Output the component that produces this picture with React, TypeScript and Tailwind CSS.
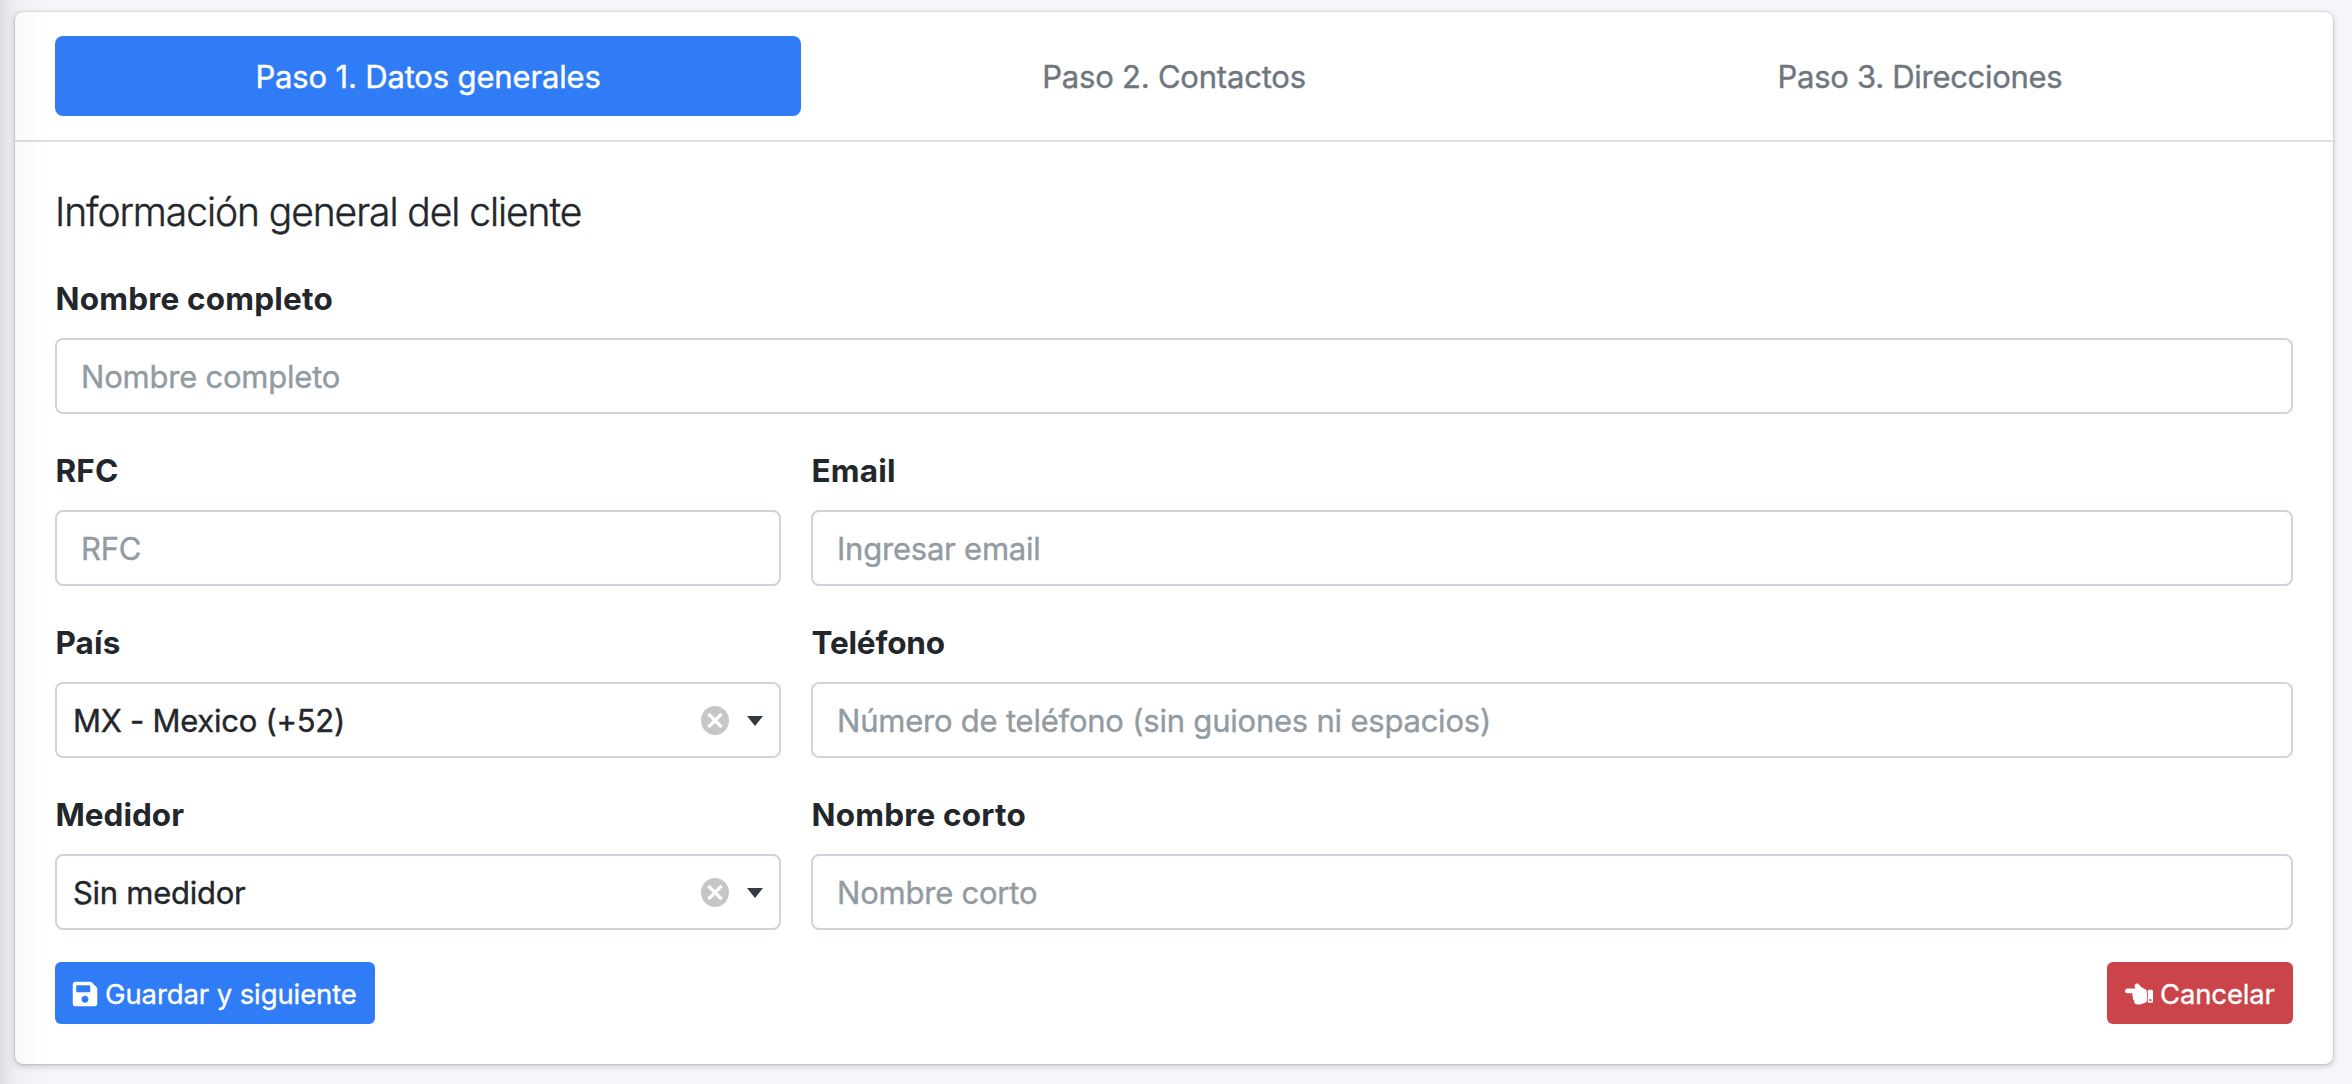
import type { ReactNode } from "react";
import { FaHandPointLeft, FaSave } from "react-icons/fa";

function Field({ label, tracking, className, children }: { label: string; tracking: string; className: string; children: ReactNode }) {
  return (
    <div className={className}>
      <label className={`mb-4 block pt-px pl-[0.5px] text-[31.5px] leading-[47px] font-bold ${tracking}`}>{label}</label>
      {children}
    </div>
  );
}

function TextInput({ placeholder }: { placeholder: string }) {
  return (
    <input
      placeholder={placeholder}
      className="block h-[76px] w-full rounded-lg border-2 border-[#ced4da] bg-white px-6 pt-px text-[31px] tracking-[-0.22px] outline-none [-webkit-text-stroke:0.4px_#939ba2] placeholder:text-[#939ba2]"
    />
  );
}

function Select({ value }: { value: string }) {
  return (
    <div className="flex h-[76px] items-center rounded-lg border-2 border-[#ced4da] bg-white pr-4 pl-4">
      <span className="flex-1 pt-[3px] text-[31px] tracking-[-0.27px] [-webkit-text-stroke:0.4px]">{value}</span>
      <svg className="mr-[18px] h-[29px] w-7" viewBox="0 0 28 29">
        <ellipse cx="14" cy="14.5" rx="14" ry="14.5" fill="#c6c6c6" />
        <path d="M7.4 7.9 20.6 21.1M20.6 7.9 7.4 21.1" stroke="#fff" strokeWidth="3.4" />
      </svg>
      <svg className="mt-0.5 h-2.5 w-4" viewBox="0 0 16 10">
        <path d="M0 0h16L8 10z" fill="#343a40" />
      </svg>
    </div>
  );
}

export default function App() {
  return (
    <div className="relative h-[1084px] w-[2352px] overflow-hidden bg-[#f4f6fa] pt-3 pl-[15px] font-['Inter','Liberation_Sans',sans-serif] text-[#23272b]">
      <main className="h-[1052px] w-[2318px] rounded-lg bg-white shadow-[0_0_2px_rgba(0,0,0,0.25),0_2px_6px_rgba(0,0,0,0.2)]">
        <nav className="grid h-[130px] grid-cols-3 border-b-2 border-[#dfdfdf] px-10 py-6 text-center text-[31px] leading-[82px] text-[#6f767e] [-webkit-text-stroke:0.4px]">
          <a className="h-20 rounded-lg bg-[#2f7cf6] tracking-[-0.16px] text-white">Paso 1. Datos generales</a>
          <a className="h-20 tracking-[-0.21px]">Paso 2. Contactos</a>
          <a className="h-20 tracking-[-0.29px]">Paso 3. Direcciones</a>
        </nav>
        <form className="px-10 pt-[46px]">
          <h1 className="mb-[38px] text-[39px] leading-[48px] font-light tracking-[-1.07px] [-webkit-text-stroke:0.4px]">Información general del cliente</h1>
          <div className="grid grid-cols-3 gap-x-[30px] gap-y-8">
            <Field label="Nombre completo" tracking="tracking-[0.2px]" className="col-span-3">
              <TextInput placeholder="Nombre completo" />
            </Field>
            <Field label="RFC" tracking="tracking-[0.1px]" className="col-span-1">
              <TextInput placeholder="RFC" />
            </Field>
            <Field label="Email" tracking="tracking-[0.2px]" className="col-span-2">
              <TextInput placeholder="Ingresar email" />
            </Field>
            <Field label="País" tracking="tracking-[0.1px]" className="col-span-1">
              <Select value="MX - Mexico (+52)" />
            </Field>
            <Field label="Teléfono" tracking="tracking-[-0.17px]" className="col-span-2">
              <TextInput placeholder="Número de teléfono (sin guiones ni espacios)" />
            </Field>
            <Field label="Medidor" tracking="tracking-normal" className="col-span-1">
              <Select value="Sin medidor" />
            </Field>
            <Field label="Nombre corto" tracking="tracking-[0.2px]" className="col-span-2">
              <TextInput placeholder="Nombre corto" />
            </Field>
          </div>
          <div className="mt-8 flex justify-between text-[27.5px] text-white [-webkit-text-stroke:0.35px]">
            <button type="button" className="flex h-[62px] w-80 items-center rounded-md bg-[#2f7cf6] pl-4 tracking-[-0.1px]">
              <FaSave className="mt-px mr-1.5 size-7" />
              <span className="pt-[3px] whitespace-nowrap">Guardar y siguiente</span>
            </button>
            <button type="button" className="flex h-[62px] w-[186px] items-center rounded-md bg-[#ca444a] pl-[18px] tracking-[-0.15px]">
              <FaHandPointLeft className="mt-px mr-[7px] size-7" />
              <span className="pt-[3px] whitespace-nowrap">Cancelar</span>
            </button>
          </div>
        </form>
      </main>
      <div className="pointer-events-none absolute inset-y-0 left-0 w-[50px] bg-[linear-gradient(to_right,rgba(0,0,0,0.09)_0,rgba(0,0,0,0.045)_12px,rgba(0,0,0,0.022)_18px,rgba(0,0,0,0.007)_36px,transparent_50px)]" />
    </div>
  );
}
